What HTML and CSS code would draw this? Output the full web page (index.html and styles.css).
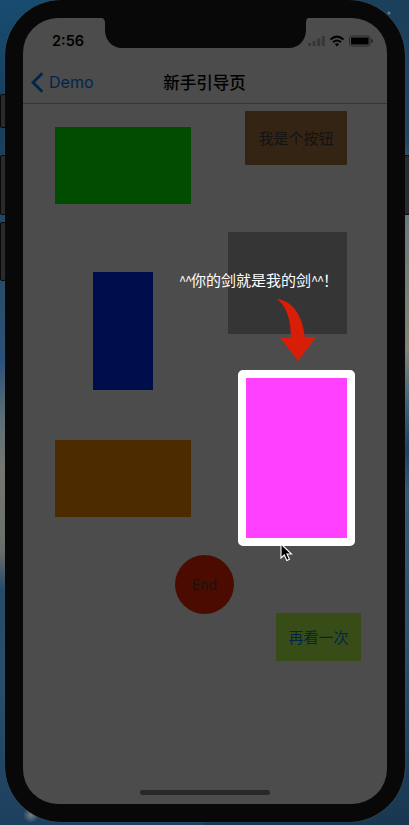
FILE: index.html
```html
<!DOCTYPE html>
<html lang="zh-CN">
<head>
<meta charset="utf-8">
<title>新手引导页</title>
<link rel="stylesheet" href="styles.css">
</head>
<body>
<div class="desktop">
  <i class="key mute"></i><i class="key volume-up"></i><i class="key volume-down"></i><i class="key power"></i>
  <main class="phone">
    <div class="screen">
      <svg class="notch" width="206" height="30" viewBox="0 0 206 30"><path d="M0 0Q3 1 3 5V12C3 22 10 30 20 30H187C197 30 204 22 204 12V5Q204 1 206 0Z" fill="#080808"/></svg>
      <header class="status">
        <span class="time">2:56</span>
        <svg class="indicators" width="68" height="14" viewBox="0 0 68 14">
          <g fill="#363636"><rect x="0" y="8" width="3" height="3" rx=".6"/><rect x="4.6" y="6" width="3" height="5" rx=".6"/><rect x="9.2" y="3.5" width="3" height="7.5" rx=".6"/><rect x="13.8" y="1" width="3" height="10" rx=".6"/></g>
          <g fill="none" stroke="#000" stroke-width="2"><path d="M22.5 4.4Q29 -1.2 35.5 4.4"/><path d="M25 7.3Q29 3.8 33 7.3"/></g><path d="M26.8 9Q29 7.3 31.2 9L29 11.4Z"/>
          <rect x="41.5" y="1" width="20.5" height="10" rx="2.4" fill="none" stroke="#282828"/><rect x="43" y="2.5" width="17.6" height="7" rx="1"/><path d="M63 3.5L65.4 6L63 8.5Z" fill="#282828"/>
        </svg>
      </header>
      <nav class="nav">
        <a class="back"><svg width="13" height="21" viewBox="0 0 13 21"><path d="M11.3 1.2L2 10.5L11.3 19.8" fill="none" stroke="#00254b" stroke-width="2.8"/></svg><span>Demo</span></a>
        <h1>新手引导页</h1>
      </nav>
      <section class="content">
        <div class="columns">
          <div class="left"><div class="green"></div><div class="blue"></div><div class="orange"></div></div>
          <div class="right"><button class="brown">我是个按钮</button><div class="gray"></div><div class="magenta"></div></div>
        </div>
        <button class="end">End</button>
        <button class="again">再看一次</button>
      </section>
      <div class="home"></div>
    </div>
  </main>
  <div class="hint"><span class="caret">^^</span>你的剑就是我的剑<span class="caret">^^</span>！</div>
  <svg class="arrow" width="40" height="64" viewBox="0 0 40 64"><path d="M1 1.2C16 1.8 27 18 28.8 39H40L22 63L4 39.5H15C14.8 23 11 8 1 1.2Z" fill="#d81e06"/></svg>
  <svg class="cursor" width="14" height="20" viewBox="0 0 14 20"><path d="M1 1V15L4.3 12L6.8 17.5L9.5 16.3L7 11H11.5Z" stroke="#fff" stroke-width="1.1"/></svg>
</div>
</body>
</html>
```
FILE: styles.css
```css
* { box-sizing: border-box; }
body { margin: 0; font-family: Inter, "Noto Sans CJK SC", sans-serif; }
button { padding: 0 0 2px; border: 0; font: 15px "Noto Sans CJK SC", sans-serif; }
.desktop {
  position: relative; width: 409px; height: 825px; padding: 0 4px 3px 5px; overflow: hidden;
  background:
    radial-gradient(circle at 31px 815px, #778084 0, transparent 8px),
    radial-gradient(circle at 389px 13px, #8ba2b2 0, transparent 2px),
    linear-gradient(#174c70 0, #173e5b 120px, #294c68 290px, #29517a 360px, #606f75 420px, #75776f 470px, #6a7069 550px, #264a68 590px, #294d6b 680px, #1d405e 100%) 0 0 / 50% 100% no-repeat,
    linear-gradient(#1b405c 0, #23435f 140px, #69777b 215px, #858373 350px, #44657a 400px, #1c405e 450px, #375873 490px, #2d506c 630px, #183750 100%);
}
.key { position: absolute; width: 6px; left: 0; background: #2b2b2b; border: 1px solid #080808; border-radius: 2px; }
.mute { top: 94px; height: 34px; }
.volume-up { top: 155px; height: 60px; }
.volume-down { top: 222px; height: 59px; }
.power { left: 404px; top: 155px; height: 60px; }
.phone { width: 400px; height: 822px; padding: 18px; background: #080808; border-radius: 56px; box-shadow: 0 0 1px #69747b; }
.screen { position: relative; width: 364px; height: 786px; background: #4c4c4c; border-radius: 35px; overflow: hidden; display: flex; flex-direction: column; }
.notch { position: absolute; left: 79px; top: 0; }
.status { height: 44px; display: flex; justify-content: space-between; padding: 13px 11px 0 29px; }
.time { font-size: 14.5px; line-height: 19px; font-weight: 600; }
.indicators { margin-top: 4px; }
.nav { height: 42px; border-bottom: 1px solid #353535; display: grid; grid-template-columns: 1fr auto 1fr; align-items: center; }
.back { display: flex; align-items: center; gap: 5px; padding: 0 0 1px 8px; color: #00254b; font-size: 16px; }
h1 { margin: 0; padding: 0 1px 2px 0; font: 500 16.5px "Noto Sans CJK SC", sans-serif; }
.content { flex: 1; display: flex; flex-direction: column; align-items: flex-start; }
.columns { width: 364px; display: flex; justify-content: space-between; padding: 7px 32px 0; }
.left { display: flex; flex-direction: column; align-items: center; padding-top: 16px; }
.green { width: 136px; height: 77px; background: #004c00; }
.blue { width: 60px; height: 118px; margin-top: 68px; background: #000d4c; }
.orange { width: 136px; height: 77px; margin-top: 50px; background: #4c2b00; }
.right { display: flex; flex-direction: column; align-items: flex-end; padding-right: 8px; }
.brown { width: 102px; height: 54px; background: #332414; color: #131313; }
.gray { width: 119px; height: 102px; margin-top: 67px; background: #353535; }
.magenta { width: 117px; height: 176px; margin: 36px -8px 0 0; background: #ff40ff; border: 8px solid #fff; border-radius: 5px; }
.end { width: 59px; height: 59px; margin: 9px 0 0 152px; padding: 0 0 1px; border-radius: 50%; background: #4c0b00; color: #131313; font: 14px Inter, sans-serif; }
.again { width: 85px; height: 48px; margin: -1px 0 0 253px; background: #384c18; color: #00254b; }
.home { width: 130px; height: 5px; margin: 0 auto 9px; border-radius: 3px; background: #282828; }
.hint { position: absolute; left: 179px; top: 269px; color: #fff; font: 15px/22px "Noto Sans CJK SC", sans-serif; white-space: nowrap; }
.caret { display: inline-block; width: 12px; font-size: 13px; letter-spacing: -1.2px; }
.arrow { position: absolute; left: 276px; top: 298px; }
.cursor { position: absolute; left: 280px; top: 543px; }
```
